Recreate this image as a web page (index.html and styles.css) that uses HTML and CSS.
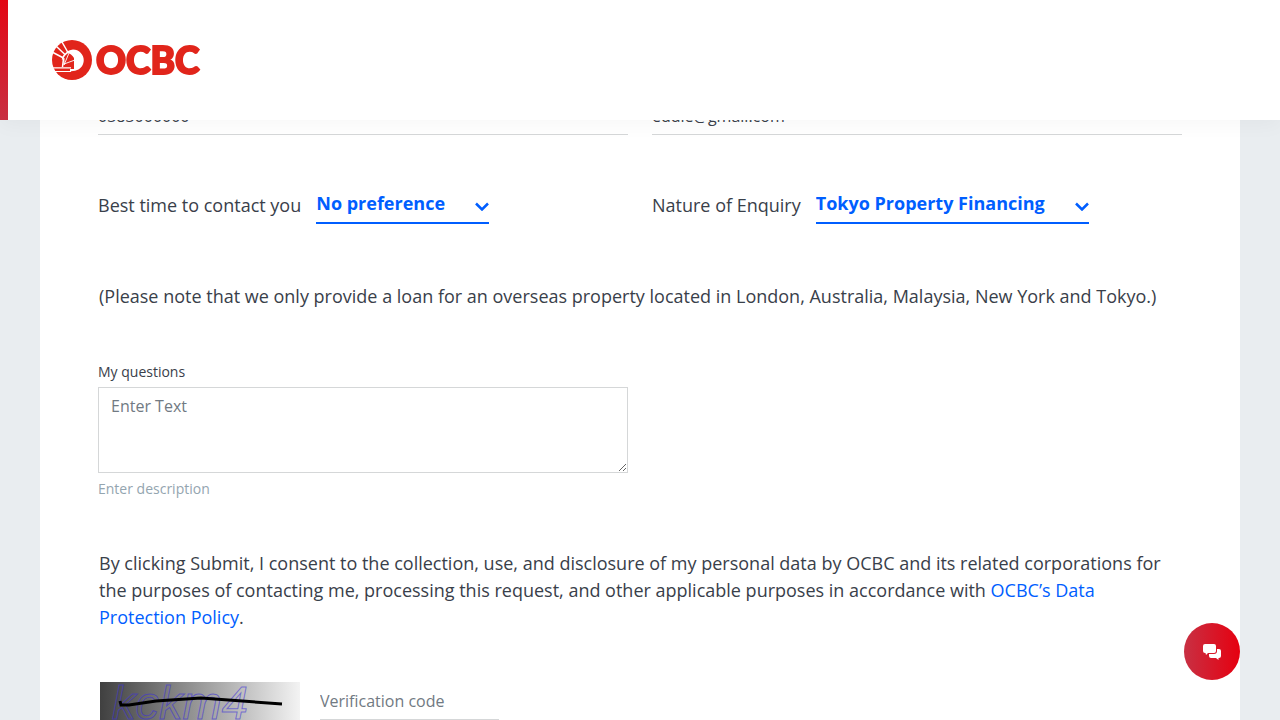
FILE: index.html
```html
<!DOCTYPE html>
<html lang="en">
<head>
<meta charset="utf-8">
<meta name="viewport" content="width=device-width, initial-scale=1">
<title>OCBC enquiry form</title>
<link rel="stylesheet" href="styles.css">
</head>
<body>
<header class="site-header">
  <a class="logo" href="#" aria-label="OCBC home">
    <svg class="logo-mark" viewBox="0 0 40 40" aria-hidden="true">
      <circle cx="20" cy="20" r="20" fill="#e1251b"/>
      <path d="M14 12Q18 9.500 21 9.500A10.500 10.500 0 0 1 21 31L18 31.500V29H22V18Q20 14 14 12z" fill="#fff"/>
      <path d="M10 2L16 12.500M4.500 6.500L13.500 15M1 12.500L11.500 18M10.500 19.500Q11 15 17 11.500M11.500 18.500L10.500 27" stroke="#fff" stroke-width="1.500" fill="none"/>
      <path d="M12 25L17 13M12 24L23 20M12 25V18" stroke="#fff" stroke-width="0.900" fill="none"/>
      <path d="M0 27.800H19M2 31.500H19" stroke="#fff" stroke-width="1.200" fill="none"/>
    </svg>
    <span class="logo-text">OCBC</span>
  </a>
</header>
<main class="panel">
  <form class="form">
    <div class="row">
      <input class="line-input" type="tel" aria-label="Contact number" value="0383000000">
      <input class="line-input" type="email" aria-label="Email" value="eddie@gmail.com">
    </div>
    <div class="row choices">
      <div class="choice">
        <label for="time">Best time to contact you</label>
        <span class="select-wrap">
          <select id="time"><option>No preference</option></select>
          <svg class="chevron" viewBox="0 0 14 9" aria-hidden="true"><path d="M1 1.500l6 6 6-6"/></svg>
        </span>
      </div>
      <div class="choice">
        <label for="nature">Nature of Enquiry</label>
        <span class="select-wrap">
          <select id="nature"><option>Tokyo Property Financing</option></select>
          <svg class="chevron" viewBox="0 0 14 9" aria-hidden="true"><path d="M1 1.500l6 6 6-6"/></svg>
        </span>
      </div>
    </div>
    <p class="text note">(Please note that we only provide a loan for an overseas property located in London, Australia, Malaysia, New York and Tokyo.)</p>
    <div class="row questions">
      <div class="field">
        <label class="small-label" for="questions">My questions</label>
        <textarea id="questions" placeholder="Enter Text"></textarea>
        <span class="hint">Enter description</span>
      </div>
    </div>
    <p class="text consent">By clicking Submit, I consent to the collection, use, and disclosure of my personal data by OCBC and its related corporations for the purposes of contacting me, processing this request, and other applicable purposes in accordance with <a href="#">OCBC’s Data Protection Policy</a>.</p>
    <div class="verify">
      <svg class="captcha" viewBox="0 0 200 50" role="img" aria-label="Verification image">
        <defs><linearGradient id="shade" x1="0" x2="1" y1="0" y2="0"><stop offset="0" stop-color="#404040"/><stop offset="1" stop-color="#f3f3f3"/></linearGradient></defs>
        <rect width="200" height="50" fill="url(#shade)"/>
        <text class="captcha-text" x="12" y="37">kckm4</text>
        <path d="M20 19l1 4h8l27-4 45-3 81 6" fill="none" stroke="#000" stroke-width="3"/>
      </svg>
      <input class="line-input code" type="text" aria-label="Verification code" placeholder="Verification code">
    </div>
  </form>
</main>
<button class="chat" type="button" aria-label="Chat">
  <svg viewBox="0 0 18 16" aria-hidden="true"><path fill="#fff" d="M2 0h9q2 0 2 2v5q0 2-2 2H5l-2 2-.5-2H2Q0 9 0 7V2Q0 0 2 0z"/><path fill="#fff" d="M14 5h2q2 0 2 2v5q0 2-2 2h-.5v2L13 14H8q-2 0-2-2v-2h5q3 0 3-3z"/></svg>
</button>
</body>
</html>
```
FILE: styles.css
```css
* { box-sizing: border-box; }
html, body { height: 100%; overflow: hidden; }
body {
  margin: 0;
  background: #e9edf0;
  color: #39404a;
  font-family: "Open Sans", "Noto Sans", sans-serif;
  font-size: 18px;
  line-height: 27px;
}
.site-header {
  position: fixed;
  z-index: 2;
  top: 0;
  left: 0;
  right: 0;
  height: 120px;
  padding-left: 44px;
  display: flex;
  align-items: center;
  background: #fff;
  box-shadow: 0 4px 20px rgba(0, 0, 0, 0.04);
  border-left: 8px solid;
  border-image: linear-gradient(#e30613, #c83043) 1;
}
.logo {
  display: flex;
  align-items: center;
  gap: 4px;
  color: #e1251b;
  text-decoration: none;
}
.logo-mark { width: 40px; height: 40px; }
.logo-text {
  font-family: Lato, sans-serif;
  font-weight: 900;
  font-size: 37px;
  line-height: 40px;
  -webkit-text-stroke: 2px #e1251b;
}
.panel {
  margin: 0 40px;
  padding: 95px 58px 40px;
  min-height: 100%;
  background: #fff;
}
.row {
  display: grid;
  grid-template-columns: 1fr 1fr;
  gap: 24px;
}
.line-input {
  min-width: 0;
  height: 40px;
  padding: 2px 0 0;
  border: 0;
  border-bottom: 1px solid #d5d7d8;
  border-radius: 0;
  background: none;
  color: #39404a;
  font: inherit;
  font-size: 16px;
}
input::placeholder, textarea::placeholder { color: #717a83; opacity: 1; }
.choices { margin-top: 52px; }
.choice {
  display: flex;
  align-items: center;
  gap: 15px;
  white-space: nowrap;
}
.select-wrap { display: grid; align-items: center; }
.select-wrap > * { grid-area: 1 / 1; }
select {
  appearance: none;
  height: 37px;
  margin: 0;
  padding: 0 44px 2px 0;
  border: 0;
  border-bottom: 2px solid #005eff;
  border-radius: 0;
  background: none;
  color: #005eff;
  font: inherit;
  font-weight: 700;
}
.chevron {
  justify-self: end;
  width: 14px;
  height: 9px;
  margin-top: 2px;
  pointer-events: none;
  fill: none;
  stroke: #005eff;
  stroke-width: 2.5;
}
.text { margin: 0; padding-left: 1px; }
.note { margin-top: 59px; }
.questions { margin-top: 51px; }
.field { display: flex; flex-direction: column; }
.small-label { font-size: 14px; line-height: 21px; margin-bottom: 5px; }
textarea {
  height: 86px;
  padding: 6px 12px;
  border: 1px solid #d5d7d8;
  border-radius: 0;
  color: #39404a;
  font: inherit;
  font-size: 16px;
  line-height: 24px;
  resize: vertical;
}
.hint { margin-top: 5px; font-size: 14px; line-height: 21px; color: #94a5b0; }
.consent { margin-top: 51px; }
.text a { color: #005eff; text-decoration: none; }
.verify {
  margin-top: 51px;
  padding-left: 2px;
  display: flex;
  align-items: flex-start;
  gap: 20px;
}
.captcha { width: 200px; height: 50px; }
.captcha-text {
  font-family: "Liberation Sans", sans-serif;
  font-style: italic;
  font-size: 47px;
  fill: none;
  stroke: #3c32d8;
  stroke-opacity: 0.6;
  stroke-width: 1;
}
.code { width: 179px; height: 38px; padding: 0; }
.chat {
  position: fixed;
  z-index: 3;
  right: 40px;
  bottom: 40px;
  width: 56px;
  height: 57px;
  padding: 0;
  border: 0;
  border-radius: 50%;
  display: grid;
  place-items: center;
  background: linear-gradient(90deg, #c83043, #e60010);
}
.chat svg { width: 18px; height: 16px; }
```
